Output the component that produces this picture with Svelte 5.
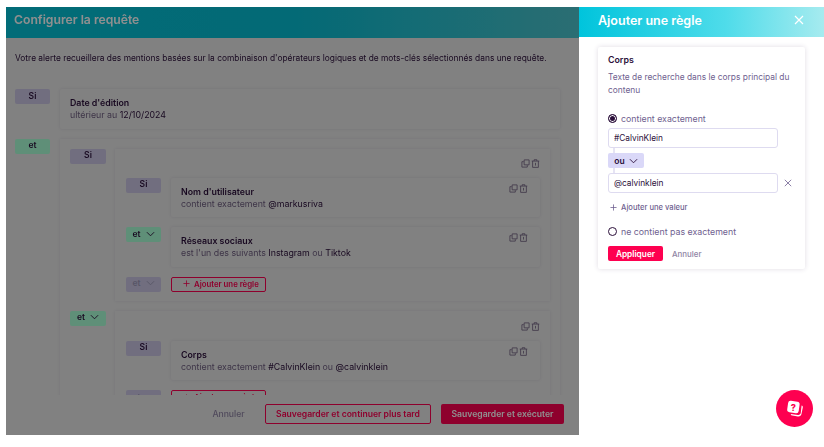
<script lang="ts">
	const description =
		"Votre alerte recueillera des mentions basées sur la combinaison d'opérateurs logiques et de mots-clés sélectionnés dans une requête.";

	let mode = $state('contains');
	let values = $state(['#CalvinKlein', '@calvinklein']);
</script>

{#snippet chevron()}
	<svg class="chev" viewBox="0 0 10 6" width="9" height="6" aria-hidden="true">
		<path d="M1 1l4 4 4-4" fill="none" stroke="currentColor" stroke-width="1" />
	</svg>
{/snippet}

{#snippet plus()}
	<svg class="plus" viewBox="0 0 8 8" width="7" height="7" aria-hidden="true">
		<path d="M4 0.5v7M0.5 4h7" fill="none" stroke="currentColor" stroke-width="0.9" />
	</svg>
{/snippet}

{#snippet actions()}
	<span class="actions" aria-hidden="true">
		<svg viewBox="0 0 10 10" width="9" height="9">
			<path d="M3.5 1h5.5v5.5h-5.5zM3 3h-2v6h6v-2" fill="none" stroke="currentColor" stroke-width="0.9" />
		</svg>
		<svg viewBox="0 0 10 10" width="9" height="9">
			<path d="M0.8 2.3h8.4M3.5 2.2v-1.4h3v1.4M1.8 2.3v7h6.4v-7M5 4.3v3" fill="none" stroke="currentColor" stroke-width="0.9" />
		</svg>
	</span>
{/snippet}

{#snippet badge(label: string, tone: string, open: boolean)}
	<div class="badge {tone}">
		<span>{label}</span>
		{#if open}{@render chevron()}{/if}
	</div>
{/snippet}

{#snippet card(title: string, body: any)}
	<div class="card">
		<div class="card-title">{title}</div>
		<div class="card-body">{@render body()}</div>
		<div class="card-actions">{@render actions()}</div>
	</div>
{/snippet}

{#snippet dateBody()}
	<span class="muted">ultérieur au</span> <b>12/10/2024</b>
{/snippet}
{#snippet userBody()}
	<span class="muted">contient exactement</span> <b>@markusriva</b>
{/snippet}
{#snippet socialBody()}
	<span class="muted">est l'un des suivants</span> <b>Instagram</b> <span class="muted">ou</span> <b>Tiktok</b>
{/snippet}
{#snippet bodyBody()}
	<span class="muted">contient exactement</span> <b>#CalvinKlein</b> <span class="muted">ou</span> <b>@calvinklein</b>
{/snippet}

<div class="window">
	<section class="query">
		<header class="query-head">Configurer la requête</header>

		<div class="query-scroll">
			<p class="intro">{description}</p>

			<div class="row top">
				{@render badge('Si', 'lilac', false)}
				<div class="card date">
					<div class="card-title">Date d'édition</div>
					<div class="card-body">{@render dateBody()}</div>
				</div>
			</div>

			<div class="row top">
				{@render badge('et', 'green', false)}
				<div class="outer">
					<div class="row mid">
						{@render badge('Si', 'lilac wide', false)}
						<div class="group">
							<div class="group-actions">{@render actions()}</div>
							<div class="row in">
								{@render badge('Si', 'lilac', false)}
								{@render card("Nom d'utilisateur", userBody)}
							</div>
							<div class="row in">
								{@render badge('et', 'green', true)}
								{@render card('Réseaux sociaux', socialBody)}
							</div>
							<div class="row in last">
								{@render badge('et', 'ghost', true)}
								<button class="add-rule">
									{@render plus()} Ajouter une règle
								</button>
							</div>
						</div>
					</div>

					<div class="row mid">
						{@render badge('et', 'green wide', true)}
						<div class="group second">
							<div class="group-actions">{@render actions()}</div>
							<div class="row in">
								{@render badge('Si', 'lilac', false)}
								{@render card('Corps', bodyBody)}
							</div>
							<div class="row in last">
								{@render badge('et', 'ghost', true)}
								<button class="add-rule">
									{@render plus()} Ajouter une règle
								</button>
							</div>
						</div>
					</div>
				</div>
			</div>
		</div>

		<footer class="query-foot">
			<button class="link">Annuler</button>
			<button class="outline">Sauvegarder et continuer plus tard</button>
			<button class="solid">Sauvegarder et exécuter</button>
		</footer>

		<div class="scrim"></div>
	</section>

	<aside class="panel">
		<header class="panel-head">
			<span>Ajouter une règle</span>
			<button class="close" aria-label="Fermer">
				<svg viewBox="0 0 10 10" width="10" height="10">
					<path d="M1 1l8 8M9 1l-8 8" stroke="currentColor" stroke-width="1.2" />
				</svg>
			</button>
		</header>

		<div class="form">
			<h3>Corps</h3>
			<p class="help">Texte de recherche dans le corps principal du contenu</p>

			<label class="radio">
				<input type="radio" bind:group={mode} value="contains" />
				<span>contient exactement</span>
			</label>

			<div class="values">
				<input class="field" bind:value={values[0]} />
				<div class="or">ou {@render chevron()}</div>
				<div class="field-row">
					<input class="field" bind:value={values[1]} />
					<svg class="remove" viewBox="0 0 10 10" width="8" height="8" aria-hidden="true">
						<path d="M1 1l8 8M9 1l-8 8" stroke="currentColor" stroke-width="1" />
					</svg>
				</div>
			</div>

			<button class="add-value">{@render plus()} Ajouter une valeur</button>

			<label class="radio second">
				<input type="radio" bind:group={mode} value="excludes" />
				<span>ne contient pas exactement</span>
			</label>

			<div class="form-actions">
				<button class="apply">Appliquer</button>
				<button class="cancel">Annuler</button>
			</div>
		</div>
	</aside>

	<button class="help-fab" aria-label="Aide">
		<svg viewBox="0 0 20 20" width="20" height="20">
			<path d="M16.6 6.5c1 .3 1.4 1 1.2 2l-1.3 6.2c-.4 2-1.7 3-3.7 2.7l-5.4-.9c-1-.2-1.6-.8-1.7-1.6l7.2 1c1.6.2 2.6-.6 2.9-2.1z" fill="#fff" />
			<rect x="2.6" y="2.2" width="11.6" height="11.6" rx="2.6" transform="rotate(8 8.4 8)" fill="#fff" />
			<text x="8.4" y="11.8" text-anchor="middle" class="q">?</text>
		</svg>
	</button>
</div>

<style>
	:global(body) {
		margin: 0;
		background: #fff;
	}

	.window {
		display: flex;
		height: 428px;
		margin: 7px 0 12px 6px;
		font-family: Inter, 'Noto Sans', sans-serif;
		color: #2b0f3a;
	}

	button {
		font: inherit;
		cursor: pointer;
	}

	/* left pane, dimmed behind the drawer */
	.query {
		--surface: #e6e6e6;
		position: relative;
		display: flex;
		flex-direction: column;
		width: 573px;
		background: var(--surface);
		overflow: hidden;
	}

	.query-head {
		flex: none;
		height: 31px;
		padding-left: 8px;
		line-height: 25px;
		font-size: 12.2px;
		font-weight: 600;
		color: #fff;
		background: linear-gradient(90deg, #05c1d6, #06bdd2 50%, #4dc4cd);
		filter: blur(0.4px);
	}

	.query-scroll {
		flex: 1;
		min-height: 0;
		overflow: hidden;
		padding: 0 9px;
		filter: blur(0.4px);
	}

	.intro {
		margin: 14px 0 25px;
		font-size: 8.4px;
		line-height: 12px;
		white-space: nowrap;
	}

	.scrim {
		position: absolute;
		inset: 0;
		background: rgba(0, 0, 0, 0.44);
	}

	.row {
		display: flex;
		align-items: flex-start;
	}

	.row.top {
		gap: 10px;
		margin-bottom: 10px;
		width: 545px;
	}

	.row.mid {
		gap: 9px;
		margin-bottom: 10px;
	}

	.row.in {
		gap: 10px;
		margin-bottom: 10px;
	}

	.row.in.last {
		margin-bottom: 9px;
	}

	.badge {
		flex: none;
		display: flex;
		align-items: center;
		justify-content: center;
		gap: 5px;
		box-sizing: border-box;
		width: 35px;
		height: 15px;
		padding-bottom: 2px;
		border-radius: 2px;
		font-size: 8.5px;
		font-weight: 600;
	}

	.badge.wide {
		width: 36px;
	}

	.badge.lilac {
		background: #c9c5e2;
	}

	.badge.green {
		background: #aaffd6;
	}

	.badge.ghost {
		background: #c9c5e2;
		color: #9d98b8;
	}

	.chev {
		display: block;
	}

	.card {
		position: relative;
		flex: 1;
		min-width: 0;
		box-sizing: border-box;
		height: 39.5px;
		padding: 7px 10px;
		background: var(--surface);
		border-radius: 2px;
		box-shadow: 0 0 3px rgba(60, 40, 90, 0.12);
	}

	.card-title {
		font-size: 8.8px;
		line-height: 13px;
		font-weight: 600;
	}

	.card-body {
		font-size: 8.8px;
		line-height: 12px;
	}

	.card-body b {
		font-weight: 400;
	}

	.muted {
		color: #6f5f80;
	}

	.card-actions {
		position: absolute;
		top: 6px;
		right: 12px;
	}

	.actions {
		display: flex;
		gap: 1px;
		color: #6f5f80;
	}

	.outer {
		flex: 1;
		min-width: 0;
		box-sizing: border-box;
		height: 300px;
		padding: 10px 10px 0;
		box-shadow: 0 0 3px rgba(60, 40, 90, 0.1);
	}

	.group {
		flex: 1;
		min-width: 0;
		padding: 10px 10px 0 11px;
		box-shadow: 0 0 3px rgba(60, 40, 90, 0.1);
	}

	.group.second {
		padding-top: 11px;
	}

	.group-actions {
		display: flex;
		justify-content: flex-end;
		height: 19px;
	}

	.add-rule {
		display: flex;
		align-items: center;
		gap: 4px;
		box-sizing: border-box;
		width: 95px;
		height: 15px;
		padding: 0 0 1px 11px;
		border: 1px solid #fe0050;
		border-radius: 2px;
		background: var(--surface);
		color: #fe0050;
		font-size: 7.8px;
		font-weight: 600;
		white-space: nowrap;
	}

	.plus {
		flex: none;
	}

	.query-foot {
		position: relative;
		flex: none;
		display: flex;
		align-items: center;
		justify-content: flex-end;
		gap: 10px;
		height: 40px;
		padding: 0 15px 3px 0;
		box-sizing: border-box;
		background: var(--surface);
		filter: blur(0.3px);
	}

	.query-foot button {
		height: 20px;
		border-radius: 2px;
		font-size: 8.6px;
		font-weight: 600;
		white-space: nowrap;
		padding: 0;
		box-sizing: border-box;
	}

	.query-foot .link {
		width: 33px;
		margin-right: 10px;
		background: none;
		border: 0;
		color: #8f84a4;
		font-weight: 500;
	}

	.outline {
		width: 166px;
		background: var(--surface);
		border: 1px solid #fe0050;
		color: #fe0050;
	}

	.solid {
		width: 123px;
		background: #fe0050;
		border: 0;
		color: #fff;
	}

	/* drawer */
	.panel {
		flex: 1;
		min-width: 0;
		display: flex;
		flex-direction: column;
		background: #fff;
	}

	.panel-head {
		flex: none;
		display: flex;
		align-items: center;
		justify-content: space-between;
		height: 30px;
		padding: 0 20px 4px 19px;
		box-sizing: border-box;
		background: linear-gradient(90deg, #00c4dc, #4fdcea 60%, #a6ebef);
		color: #fff;
		font-size: 12.5px;
		font-weight: 600;
	}

	.close {
		display: flex;
		padding: 0;
		border: 0;
		background: none;
		color: #fff;
	}

	.form {
		width: 207px;
		box-sizing: border-box;
		height: 222px;
		margin: 10px 0 0 19px;
		padding: 7px 10px 0;
		border-radius: 2px;
		box-shadow: 0 0 5px rgba(60, 40, 90, 0.16);
	}

	.form h3 {
		margin: 0 0 5px;
		font-size: 8.8px;
		line-height: 12px;
		font-weight: 600;
	}

	.help {
		margin: 0 0 15px;
		font-size: 8.4px;
		line-height: 13px;
		color: #6f5f90;
	}

	.radio {
		display: flex;
		align-items: center;
		gap: 4px;
		height: 12px;
		font-size: 8.8px;
		color: #6f5f90;
	}

	.radio input {
		appearance: none;
		flex: none;
		box-sizing: border-box;
		width: 9px;
		height: 9px;
		margin: 0;
		border: 1px solid #2b0f3a;
		border-radius: 50%;
		background: #fff;
	}

	.radio input:checked {
		background: #2b0f3a;
		box-shadow: inset 0 0 0 1px #fff;
	}

	.values {
		position: relative;
		margin-top: 4px;
		display: flex;
		flex-direction: column;
		gap: 5px;
	}

	/* connector running behind the two fields */
	.values::before {
		content: '';
		position: absolute;
		left: 5px;
		top: 19px;
		width: 2px;
		height: 27px;
		background: #e6e4f4;
	}

	.field {
		position: relative;
		box-sizing: border-box;
		width: 170px;
		height: 20px;
		padding: 0 5px;
		border: 1px solid #dedbf0;
		border-radius: 3px;
		background: #fff;
		color: #2b0f3a;
		font: inherit;
		font-size: 8.3px;
	}

	.or {
		position: relative;
		display: flex;
		align-items: center;
		justify-content: center;
		gap: 4px;
		width: 36px;
		height: 15px;
		border-radius: 2px;
		background: #dad8f8;
		font-size: 8.5px;
		font-weight: 600;
	}

	.field-row {
		display: flex;
		align-items: center;
		gap: 6px;
	}

	.remove {
		color: #6f5f90;
	}

	.add-value {
		display: flex;
		align-items: center;
		gap: 4px;
		margin-top: 8px;
		height: 12px;
		padding: 0 0 0 2px;
		border: 0;
		background: none;
		color: #6f5f90;
		font-size: 7.6px;
		font-weight: 500;
	}

	.radio.second {
		margin-top: 12px;
	}

	.form-actions {
		display: flex;
		align-items: center;
		gap: 9px;
		margin-top: 9px;
	}

	.apply {
		width: 55px;
		height: 15px;
		padding: 0;
		border: 0;
		border-radius: 2px;
		background: #fe0050;
		color: #fff;
		font-size: 8.3px;
		font-weight: 600;
	}

	.cancel {
		padding: 0;
		border: 0;
		background: none;
		color: #8f84a4;
		font-size: 7.9px;
		font-weight: 500;
	}

	.help-fab {
		position: fixed;
		left: 776px;
		top: 390px;
		display: flex;
		align-items: center;
		justify-content: center;
		width: 37px;
		height: 37px;
		padding: 0;
		border: 0;
		border-radius: 50%;
		background: #fe0050;
	}

	.q {
		font-size: 9px;
		font-weight: 800;
		fill: #fe0050;
	}
</style>
